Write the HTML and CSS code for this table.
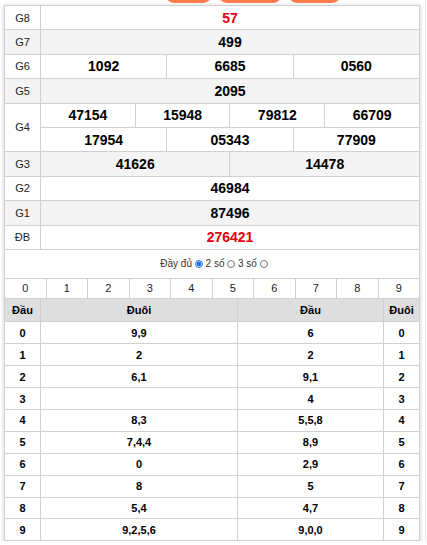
FILE: index.html
```html
<!DOCTYPE html>
<html lang="vi">
<head>
<meta charset="utf-8">
<title>Kết quả xổ số</title>
<link rel="stylesheet" href="styles.css">
</head>
<body>
<div class="page">
  <div class="tabs">
    <span class="tab t1"></span>
    <span class="tab t2"></span>
    <span class="tab t3"></span>
  </div>
  <div class="box">
    <table class="kq">
      <colgroup><col class="c-lbl"><col span="12"></colgroup>
      <tr><td class="lbl">G8</td><td colspan="12" class="red">57</td></tr>
      <tr class="alt"><td class="lbl">G7</td><td colspan="12">499</td></tr>
      <tr><td class="lbl">G6</td><td colspan="4">1092</td><td colspan="4">6685</td><td colspan="4">0560</td></tr>
      <tr class="alt"><td class="lbl">G5</td><td colspan="12">2095</td></tr>
      <tr><td class="lbl" rowspan="2">G4</td><td colspan="3">47154</td><td colspan="3">15948</td><td colspan="3">79812</td><td colspan="3">66709</td></tr>
      <tr><td colspan="4">17954</td><td colspan="4">05343</td><td colspan="4">77909</td></tr>
      <tr class="alt"><td class="lbl">G3</td><td colspan="6">41626</td><td colspan="6">14478</td></tr>
      <tr><td class="lbl">G2</td><td colspan="12">46984</td></tr>
      <tr class="alt"><td class="lbl">G1</td><td colspan="12">87496</td></tr>
      <tr><td class="lbl">ĐB</td><td colspan="12" class="red">276421</td></tr>
    </table>
    <div class="opts">Đầy đủ <input type="radio" name="m" class="rd" checked> 2 số <input type="radio" name="m" class="rd"> 3 số <input type="radio" name="m" class="rd"></div>
    <table class="digits">
      <tr><td>0</td><td>1</td><td>2</td><td>3</td><td>4</td><td>5</td><td>6</td><td>7</td><td>8</td><td>9</td></tr>
    </table>
    <table class="lt">
      <colgroup><col class="w1"><col class="w2"><col class="w3"><col class="w4"></colgroup>
      <tr class="hd"><th>Đầu</th><th>Đuôi</th><th>Đầu</th><th>Đuôi</th></tr>
      <tr><td>0</td><td>9,9</td><td>6</td><td>0</td></tr>
      <tr><td>1</td><td>2</td><td>2</td><td>1</td></tr>
      <tr><td>2</td><td>6,1</td><td>9,1</td><td>2</td></tr>
      <tr><td>3</td><td></td><td>4</td><td>3</td></tr>
      <tr><td>4</td><td>8,3</td><td>5,5,8</td><td>4</td></tr>
      <tr><td>5</td><td>7,4,4</td><td>8,9</td><td>5</td></tr>
      <tr><td>6</td><td>0</td><td>2,9</td><td>6</td></tr>
      <tr><td>7</td><td>8</td><td>5</td><td>7</td></tr>
      <tr><td>8</td><td>5,4</td><td>4,7</td><td>8</td></tr>
      <tr><td>9</td><td>9,2,5,6</td><td>9,0,0</td><td>9</td></tr>
    </table>
  </div>
</div>
</body>
</html>
```

FILE: styles.css
```css
html, body {
  margin: 0;
  padding: 0;
  background: #fff;
}
body {
  font-family: "Liberation Sans", Arial, sans-serif;
  color: #000;
}
.page {
  width: 425px;
  min-height: 545px;
  border-right: 1px solid #e2e2e2;
}
.tabs {
  display: flex;
  gap: 6px;
  height: 20px;
  margin-top: -17px;
  padding-left: 165px;
}
.tab {
  display: block;
  height: 20px;
  background: #ff7b4b;
  border-radius: 9px;
}
.t1 { width: 47px; }
.t2 { width: 64px; }
.t3 { width: 53px; }
.box {
  margin: 2px 0 0 4px;
  width: 416px;
  box-shadow: 0 1px 4px rgba(0, 0, 0, 0.22);
  background: #fff;
}
table {
  border-collapse: collapse;
  table-layout: fixed;
  width: 100%;
  border: 1px solid #d0d0d0;
}
td, th {
  border: 1px solid #d0d0d0;
  padding: 0;
  text-align: center;
}
.kq tr {
  height: 24.4px;
}
.kq td {
  font-size: 14px;
  font-weight: bold;
}
.kq .c-lbl {
  width: 36px;
}
.kq td.lbl {
  font-size: 11px;
  font-weight: normal;
  color: #222;
}
.kq .alt {
  background: #f4f4f4;
}
.red {
  color: #e3000f;
}
.opts {
  height: 28px;
  line-height: 28px;
  border-left: 1px solid #d0d0d0;
  border-right: 1px solid #d0d0d0;
  text-align: center;
  font-size: 10px;
  color: #333;
  padding-left: 4px;
}
.rd {
  width: 8px;
  height: 8px;
  margin: 0;
  vertical-align: -1px;
  accent-color: #1a73e8;
}
.digits tr {
  height: 20px;
}
.digits td {
  font-size: 11px;
  color: #222;
}
.lt {
  border-top: hidden;
}
.lt .w1 { width: 36px; }
.lt .w2 { width: 197px; }
.lt .w3 { width: 146px; }
.lt .hd {
  height: 23px;
  background: #dedede;
}
.lt th {
  font-size: 11px;
  font-weight: bold;
}
.lt tr {
  height: 21.9px;
}
.lt td {
  font-size: 11px;
  font-weight: bold;
}
```
